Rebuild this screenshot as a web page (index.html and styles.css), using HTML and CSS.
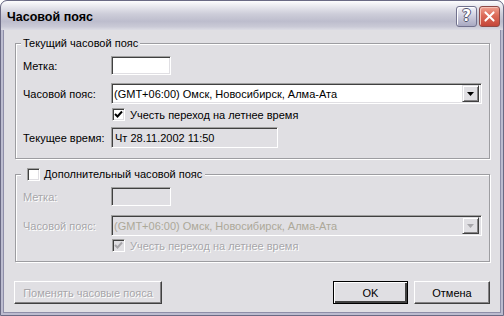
FILE: index.html
```html
<!DOCTYPE html>
<html lang="ru">
<head>
  <meta charset="UTF-8">
  <title>Часовой пояс</title>
  <link rel="stylesheet" href="styles.css">
</head>
<body>
  <div class="window">
    <div class="titlebar">
      <span class="title">Часовой пояс</span>
      <div class="caption-btns">
        <div class="cap-btn help">?</div>
        <div class="cap-btn close">
          <svg width="21" height="21" viewBox="0 0 21 21">
            <path d="M6 6 L15 15 M15 6 L6 15" stroke="#fff" stroke-width="2.2" stroke-linecap="round"/>
          </svg>
        </div>
      </div>
    </div>

    <div class="frame">
      <div class="client">

        <div class="group">
          <div class="group-title">Текущий часовой пояс</div>
          <div class="row first">
            <span class="lbl">Метка:</span>
            <input class="edit short" type="text">
          </div>
          <div class="row combo-row">
            <span class="lbl">Часовой пояс:</span>
            <div class="combo">
              <span class="combo-text">(GMT+06:00) Омск, Новосибирск, Алма-Ата</span>
              <span class="drop"><svg width="7" height="4" viewBox="0 0 7 4"><polygon points="0,0 7,0 3.5,4" fill="#000"/></svg></span>
            </div>
          </div>
          <div class="row check-row">
            <span class="check checked"><svg width="9" height="9" viewBox="0 0 9 9"><polyline points="1,4 3.5,6.5 8,1.5" fill="none" stroke="#000" stroke-width="2"/></svg></span>
            <span>Учесть переход на летнее время</span>
          </div>
          <div class="row time-row">
            <span class="lbl">Текущее время:</span>
            <input class="edit time" type="text" value="Чт 28.11.2002 11:50" readonly>
          </div>
        </div>

        <div class="group second disabled">
          <div class="group-title">
            <span class="check"></span>
            <span>Дополнительный часовой пояс</span>
          </div>
          <div class="row first">
            <span class="lbl">Метка:</span>
            <input class="edit short" type="text" disabled>
          </div>
          <div class="row combo-row2">
            <span class="lbl">Часовой пояс:</span>
            <div class="combo">
              <span class="combo-text">(GMT+06:00) Омск, Новосибирск, Алма-Ата</span>
              <span class="drop"><svg width="7" height="4" viewBox="0 0 7 4"><polygon points="0,0 7,0 3.5,4" fill="#a7a6aa"/></svg></span>
            </div>
          </div>
          <div class="row check-row2">
            <span class="check checked"><svg width="9" height="9" viewBox="0 0 9 9"><polyline points="1,4 3.5,6.5 8,1.5" fill="none" stroke="#a7a6aa" stroke-width="2"/></svg></span>
            <span>Учесть переход на летнее время</span>
          </div>
        </div>

        <div class="buttons">
          <button class="btn swap" disabled>Поменять часовые пояса</button>
          <span class="spacer"></span>
          <button class="btn default">OK</button>
          <button class="btn cancel">Отмена</button>
        </div>

      </div>
    </div>
  </div>
</body>
</html>
```

FILE: styles.css
```css
body {
  margin: 0;
  font-family: 'Liberation Sans', Arial, sans-serif;
  font-size: 11px;
  color: #000;
  background: #fff;
}

.window {
  width: 504px;
  height: 316px;
  box-sizing: border-box;
  border: 1px solid #6a6a84;
  border-radius: 7px 7px 0 0;
  display: flex;
  flex-direction: column;
  background: #bcbccf;
  overflow: hidden;
}

.titlebar {
  height: 29px;
  display: flex;
  align-items: center;
  padding: 0 3px 0 6px;
  background: linear-gradient(#fdfdfe 0%, #e9e9ef 18%, #cdcdd9 45%, #bdbdcd 70%, #c9c9d6 88%, #dcdce4 100%);
  border-radius: 6px 6px 0 0;
}

.title {
  flex: 1;
  font-weight: bold;
  font-size: 12.5px;
  padding-top: 2px;
}

.caption-btns {
  display: flex;
  gap: 2px;
  margin-top: 1px;
}

.cap-btn {
  width: 21px;
  height: 21px;
  box-sizing: border-box;
  border-radius: 3px;
  display: flex;
  align-items: center;
  justify-content: center;
}

.cap-btn.help {
  border: 1px solid #72728e;
  background: linear-gradient(#f4f4fa, #c8c8da 55%, #a9a9c2);
  box-shadow: inset 1px 1px 0 #fff;
  color: #fff;
  font-family: 'DejaVu Sans', sans-serif;
  font-weight: bold;
  font-size: 15px;
  text-shadow: 1px 0 0 #55556e, -1px 0 0 #55556e, 0 1px 0 #55556e, 0 -1px 0 #55556e;
}

.cap-btn.close {
  border: 1px solid #8e4a48;
  background: linear-gradient(#f0a090, #dc6b58 45%, #c4453a);
  box-shadow: inset 1px 1px 0 #f6c2b6;
}

.frame {
  flex: 1;
  display: flex;
  padding: 0 2px 2px;
}

.client {
  flex: 1;
  display: flex;
  flex-direction: column;
  background: #e0dfe3;
  border: 1px solid #8e8ea8;
  border-top: none;
  padding: 13px 10px 0 11px;
}

.group {
  display: flex;
  flex-direction: column;
  border: 1px solid #9d9da1;
  box-shadow: inset 1px 1px 0 #fff, 1px 1px 0 #fff;
  padding: 0 7px 10px;
}

.group.second {
  margin-top: 15px;
  padding-bottom: 9px;
}

.group-title {
  display: flex;
  align-items: center;
  align-self: flex-start;
  height: 13px;
  line-height: 13px;
  margin: -7px 0 0 -2px;
  padding: 0 2px;
  background: #e0dfe3;
}

.group.second .group-title {
  padding: 0 3px 0 6px;
  gap: 4px;
}

.row {
  display: flex;
  align-items: center;
  white-space: nowrap;
}

.row.first {
  margin-top: 6px;
}

.combo-row {
  margin-top: 8px;
}

.check-row {
  margin-top: 4px;
}

.time-row {
  margin-top: 6px;
}

.combo-row2 {
  margin-top: 9px;
}

.check-row2 {
  margin-top: 3px;
}

.check-row,
.check-row2 {
  padding-left: 89px;
  gap: 5px;
}

.lbl {
  width: 88px;
  flex-shrink: 0;
}

.edit {
  font: inherit;
  height: 19px;
  box-sizing: border-box;
  margin: 0;
  padding: 0 3px;
  background: #fff;
  border: 1px solid;
  border-color: #a0a0a0 #fff #fff #a0a0a0;
  box-shadow: inset 1px 1px 0 #404040, inset -1px -1px 0 #e0dfe3;
  outline: none;
  color: #000;
}

.edit.short {
  width: 60px;
}

.edit.time {
  width: 167px;
  height: 21px;
  background: #e0dfe3;
}

.combo {
  flex: 1;
  height: 21px;
  box-sizing: border-box;
  display: flex;
  align-items: center;
  background: #fff;
  border: 1px solid;
  border-color: #a0a0a0 #fff #fff #a0a0a0;
  box-shadow: inset 1px 1px 0 #404040, inset -1px -1px 0 #e0dfe3;
  padding: 1px 2px 1px 2px;
}

.combo-text {
  flex: 1;
}

.drop {
  width: 17px;
  height: 17px;
  box-sizing: border-box;
  display: flex;
  align-items: center;
  justify-content: center;
  background: #e0dfe3;
  border: 1px solid;
  border-color: #e0dfe3 #404040 #404040 #e0dfe3;
  box-shadow: inset 1px 1px 0 #fff, inset -1px -1px 0 #848284;
}

.check {
  width: 13px;
  height: 13px;
  box-sizing: border-box;
  flex-shrink: 0;
  display: flex;
  align-items: center;
  justify-content: center;
  background: #fff;
  border: 1px solid;
  border-color: #a0a0a0 #fff #fff #a0a0a0;
  box-shadow: inset 1px 1px 0 #404040, inset -1px -1px 0 #e0dfe3;
}

.disabled .row {
  color: #a7a6aa;
  text-shadow: 1px 1px 0 #fff;
}

.disabled .edit,
.disabled .combo,
.disabled .row .check {
  background: #e0dfe3;
}

.disabled .combo-text {
  color: #aca899;
  text-shadow: none;
}

.buttons {
  display: flex;
  margin-top: 19px;
  gap: 6px;
}

.spacer {
  flex: 1;
}

.btn {
  font: inherit;
  height: 23px;
  box-sizing: border-box;
  margin: 0;
  padding: 0;
  color: #000;
  background: #e0dfe3;
  border: 1px solid;
  border-color: #fff #404040 #404040 #fff;
  box-shadow: inset -1px -1px 0 #848284;
}

.btn.swap {
  width: 148px;
  margin-left: -1px;
  color: #a7a6aa;
  text-shadow: 1px 1px 0 #fff;
}

.btn.default {
  width: 75px;
  border: 1px solid #000;
  box-shadow: inset 1px 1px 0 #fff, inset -2px -2px 0 #404040, inset -1px -1px 0 #404040, inset -2px -2px 0 #848284;
}

.btn.cancel {
  width: 76px;
}
```
